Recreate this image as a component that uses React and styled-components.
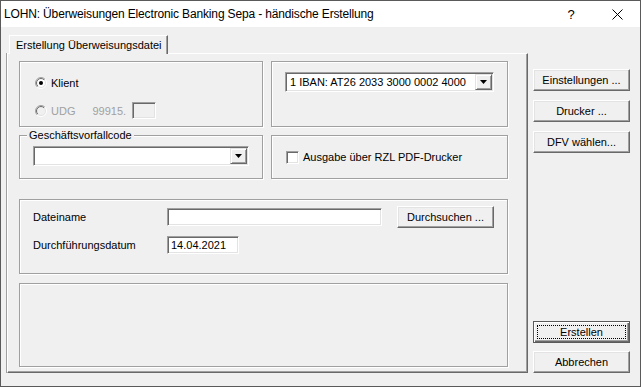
import React from 'react';
import styled, { createGlobalStyle } from 'styled-components';

const GlobalStyle = createGlobalStyle`
  html, body {
    margin: 0;
    padding: 0;
    background: #ffffff;
  }
  body {
    font-family: "Liberation Sans", Arial, sans-serif;
    font-size: 11px;
    color: #000000;
  }
  * {
    box-sizing: border-box;
  }
`;

const Window = styled.div`
  width: 641px;
  height: 387px;
  border: 1px solid #5a5a5a;
  background: #f0f0f0;
  display: flex;
  flex-direction: column;
`;

const TitleBar = styled.div`
  height: 26px;
  flex-shrink: 0;
  background: #ffffff;
  display: flex;
  align-items: center;
`;

const Title = styled.div`
  flex: 1;
  padding-left: 3px;
  font-size: 12px;
  letter-spacing: -0.15px;
  white-space: nowrap;
`;

const CaptionButton = styled.div`
  width: 46px;
  height: 26px;
  display: flex;
  align-items: center;
  justify-content: center;
  font-size: 13px;
`;

const Body = styled.div`
  flex: 1;
  display: flex;
  padding: 8px 0 13px 6px;
`;

const LeftColumn = styled.div`
  width: 521px;
  display: flex;
  flex-direction: column;
`;

const TabStrip = styled.div`
  height: 18px;
  display: flex;
  padding-left: 2px;
`;

const Tab = styled.div`
  position: relative;
  z-index: 1;
  height: 19px;
  margin-bottom: -1px;
  padding: 0 5px 0 6px;
  display: flex;
  align-items: center;
  background: #f0f0f0;
  border-top: 1px solid #ffffff;
  border-left: 1px solid #ffffff;
  border-right: 1px solid #696969;
  box-shadow: inset -1px 0 0 #a0a0a0;
  white-space: nowrap;
`;

const TabPanel = styled.div`
  flex: 1;
  display: flex;
  flex-direction: column;
  padding: 7px 19px 5px 11px;
  border-top: 1px solid #ffffff;
  border-left: 1px solid #ffffff;
  border-right: 1px solid #696969;
  border-bottom: 1px solid #696969;
  box-shadow: inset -1px -1px 0 #a0a0a0, -1px 0 0 #a0a0a0;
`;

const Row = styled.div`
  display: grid;
  grid-template-columns: 244px 237px;
  column-gap: 8px;
  height: ${p => p.$h}px;
  margin-top: ${p => p.$mt || 0}px;
`;

const Group = styled.div`
  position: relative;
  border: 1px solid #a0a0a0;
  box-shadow: inset 1px 1px 0 #ffffff, 1px 1px 0 #ffffff;
`;

const ClientGroup = styled(Group)`
  display: flex;
  flex-direction: column;
  gap: 11px;
  padding: 12px 0 0 15px;
`;

const ComboGroup = styled(Group)`
  padding: ${p => p.$pt}px 0 0 13px;
`;

const CheckGroup = styled(Group)`
  display: flex;
  align-items: center;
  padding-left: 14px;
`;

const FileGroup = styled(Group)`
  height: 75px;
  margin-top: 20px;
  display: grid;
  grid-template-columns: 134px 215px 112px;
  grid-template-rows: 22px 18px;
  row-gap: 8px;
  align-items: center;
  align-content: start;
  padding: 6px 0 0 13px;

  & > button {
    justify-self: end;
  }
`;

const EmptyGroup = styled(Group)`
  flex: 1;
  margin-top: 9px;
`;

const Legend = styled.span`
  position: absolute;
  top: -7px;
  left: 7px;
  padding: 0 2px;
  line-height: 13px;
  background: #f0f0f0;
`;

const OptionRow = styled.div`
  display: flex;
  align-items: center;
  height: 17px;
  color: ${p => (p.$disabled ? '#a0a0a0' : '#000000')};
`;

const OptionLabel = styled.span`
  margin-left: ${p => p.$ml || 4}px;
`;

const Sunken = styled.div`
  border: 1px solid;
  border-color: #a0a0a0 #ffffff #ffffff #a0a0a0;
  box-shadow: inset 1px 1px 0 #696969, inset -1px -1px 0 #e3e3e3;
  background: ${p => (p.$disabled ? '#f0f0f0' : '#ffffff')};
`;

const SmallField = styled(Sunken)`
  width: 24px;
  height: 17px;
  margin-left: 6px;
`;

const TextField = styled(Sunken)`
  width: ${p => p.$w}px;
  height: 18px;
  display: flex;
  align-items: center;
  padding-left: 3px;
  white-space: nowrap;
`;

const Combo = styled(Sunken)`
  width: ${p => p.$w}px;
  height: 20px;
  display: flex;
  align-items: center;
  padding: 1px 1px 1px 4px;
`;

const ComboText = styled.span`
  flex: 1;
  white-space: nowrap;
`;

const ArrowButton = styled.div`
  width: 17px;
  height: 16px;
  display: flex;
  align-items: center;
  justify-content: center;
  background: #f0f0f0;
  border: 1px solid;
  border-color: #e3e3e3 #696969 #696969 #e3e3e3;
  box-shadow: inset 1px 1px 0 #ffffff, inset -1px -1px 0 #a0a0a0;
`;

const CheckBox = styled(Sunken)`
  width: 13px;
  height: 13px;
`;

const Label = styled.span`
  white-space: nowrap;
`;

const RightColumn = styled.div`
  width: 97px;
  margin-left: 5px;
  display: flex;
  flex-direction: column;
  padding-top: 34px;
`;

const Button = styled.button`
  width: 97px;
  height: 22px;
  margin-top: ${p => p.$mt || 0}px;
  padding: 0;
  display: flex;
  align-items: center;
  justify-content: center;
  font-family: inherit;
  font-size: 11px;
  color: #000000;
  background: #f0f0f0;
  border: 1px solid;
  border-color: #ffffff #696969 #696969 #ffffff;
  box-shadow: inset -1px -1px 0 #a0a0a0, inset 1px 1px 0 #e3e3e3;
  white-space: nowrap;
`;

const DefaultButton = styled(Button)`
  margin-top: auto;
  padding: 3px;
  border: 1px solid #5a5a5a;
  box-shadow: inset 1px 1px 0 #ffffff, inset -1px -1px 0 #696969, inset -2px -2px 0 #a0a0a0;
`;

const FocusRect = styled.span`
  flex: 1;
  align-self: stretch;
  display: flex;
  align-items: center;
  justify-content: center;
  border: 1px dotted #000000;
`;

const Radio = ({ checked, disabled }) => (
  <svg width="12" height="12" viewBox="0 0 12 12">
    <defs>
      <linearGradient id="radioOuter" x1="0" y1="0" x2="1" y2="1">
        <stop offset="0.5" stopColor="#a0a0a0" />
        <stop offset="0.5" stopColor="#ffffff" />
      </linearGradient>
      <linearGradient id="radioInner" x1="0" y1="0" x2="1" y2="1">
        <stop offset="0.5" stopColor="#696969" />
        <stop offset="0.5" stopColor="#e3e3e3" />
      </linearGradient>
    </defs>
    <circle cx="6" cy="6" r="5.5" fill="none" stroke="url(#radioOuter)" />
    <circle cx="6" cy="6" r="4.5" fill={disabled ? '#f0f0f0' : '#ffffff'} stroke="url(#radioInner)" />
    {checked && <circle cx="6" cy="6" r="2" fill="#000000" />}
  </svg>
);

const DownArrow = () => (
  <svg width="7" height="4" viewBox="0 0 7 4">
    <polygon points="0,0 7,0 3.5,4" fill="#000000" />
  </svg>
);

const CloseIcon = () => (
  <svg width="11" height="11" viewBox="0 0 11 11">
    <path d="M0.5 0.5 L10.5 10.5 M10.5 0.5 L0.5 10.5" stroke="#000000" strokeWidth="1" fill="none" />
  </svg>
);

const App = () => (
  <>
    <GlobalStyle />
    <Window>
      <TitleBar>
        <Title>LOHN: Überweisungen Electronic Banking Sepa - händische Erstellung</Title>
        <CaptionButton>?</CaptionButton>
        <CaptionButton>
          <CloseIcon />
        </CaptionButton>
      </TitleBar>
      <Body>
        <LeftColumn>
          <TabStrip>
            <Tab>Erstellung Überweisungsdatei</Tab>
          </TabStrip>
          <TabPanel>
            <Row $h={66}>
              <ClientGroup>
                <OptionRow>
                  <Radio checked />
                  <OptionLabel>Klient</OptionLabel>
                </OptionRow>
                <OptionRow $disabled>
                  <Radio disabled />
                  <OptionLabel>UDG</OptionLabel>
                  <OptionLabel $ml={17}>99915.</OptionLabel>
                  <SmallField $disabled />
                </OptionRow>
              </ClientGroup>
              <ComboGroup $pt={10}>
                <Combo $w={209}>
                  <ComboText>1 IBAN: AT26 2033 3000 0002 4000</ComboText>
                  <ArrowButton>
                    <DownArrow />
                  </ArrowButton>
                </Combo>
              </ComboGroup>
            </Row>
            <Row $h={44} $mt={8}>
              <ComboGroup $pt={10}>
                <Legend>Geschäftsvorfallcode</Legend>
                <Combo $w={216}>
                  <ComboText />
                  <ArrowButton>
                    <DownArrow />
                  </ArrowButton>
                </Combo>
              </ComboGroup>
              <CheckGroup>
                <CheckBox />
                <OptionLabel>Ausgabe über RZL PDF-Drucker</OptionLabel>
              </CheckGroup>
            </Row>
            <FileGroup>
              <Label>Dateiname</Label>
              <TextField $w={215} />
              <Button>Durchsuchen ...</Button>
              <Label>Durchführungsdatum</Label>
              <TextField $w={72}>14.04.2021</TextField>
            </FileGroup>
            <EmptyGroup />
          </TabPanel>
        </LeftColumn>
        <RightColumn>
          <Button>Einstellungen ...</Button>
          <Button $mt={9}>Drucker ...</Button>
          <Button $mt={9}>DFV wählen...</Button>
          <DefaultButton>
            <FocusRect>Erstellen</FocusRect>
          </DefaultButton>
          <Button $mt={8}>Abbrechen</Button>
        </RightColumn>
      </Body>
    </Window>
  </>
);

export default App;
